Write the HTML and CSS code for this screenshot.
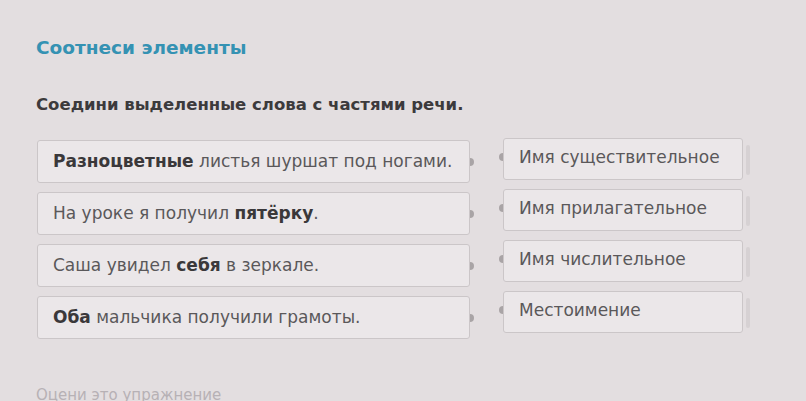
FILE: index.html
```html
<!DOCTYPE html>
<html lang="ru">
<head>
  <meta charset="UTF-8">
  <meta name="viewport" content="width=device-width, initial-scale=1.0">
  <title>Соотнеси элементы</title>
  <link rel="stylesheet" href="styles.css">
</head>
<body>
  <div class="task">
    <h2>Соотнеси элементы</h2>
    <p class="question">Соедини выделенные слова с частями речи.</p>

    <div class="match">
      <div class="column left">
        <div class="card"><b>Разноцветные</b> листья шуршат под ногами.<span class="dot"></span></div>
        <div class="card">На уроке я получил <b>пятёрку</b>.<span class="dot"></span></div>
        <div class="card">Саша увидел <b>себя</b> в зеркале.<span class="dot"></span></div>
        <div class="card"><b>Оба</b> мальчика получили грамоты.<span class="dot"></span></div>
      </div>
      <div class="column right">
        <div class="card">Имя существительное<span class="dot"></span><span class="handle"></span></div>
        <div class="card">Имя прилагательное<span class="dot"></span><span class="handle"></span></div>
        <div class="card">Имя числительное<span class="dot"></span><span class="handle"></span></div>
        <div class="card">Местоимение<span class="dot"></span><span class="handle"></span></div>
      </div>
    </div>

    <p class="rate">Оцени это упражнение</p>
  </div>
</body>
</html>
```

FILE: styles.css
```css
* {
  margin: 0;
  padding: 0;
  box-sizing: border-box;
}
body {
  font-family: 'DejaVu Sans', 'Open Sans', sans-serif;
  background-color: #e3dee0;
  color: #555;
  overflow: hidden;
}
.task {
  padding: 37px 36px 0 36px;
}
h2 {
  font-size: 18.5px;
  line-height: 22px;
  font-weight: bold;
  color: #3592b3;
}
.question {
  font-size: 16.5px;
  line-height: 22px;
  font-weight: bold;
  color: #3c3a3c;
  margin-top: 35px;
}
.match {
  display: flex;
  gap: 33px;
  margin-top: 21px;
  margin-left: 1px;
}
.column {
  display: flex;
  flex-direction: column;
  gap: 9px;
}
.left {
  width: 433px;
  margin-top: 3px;
}
.right {
  width: 240px;
  margin-top: 1px;
}
.card {
  position: relative;
  height: 43px;
  padding: 0 15px;
  line-height: 40px;
  background-color: #ebe7e9;
  border: 1px solid #cbc6c8;
  border-radius: 3px;
  font-size: 17px;
  color: #5a585a;
  white-space: nowrap;
}
.right .card {
  height: 42px;
  line-height: 36px;
}
.card b {
  color: #3a383a;
  font-weight: 700;
}
.dot {
  position: absolute;
  top: 50%;
  width: 4px;
  height: 8px;
  margin-top: -4px;
  background-color: #a9a4a6;
}
.left .dot {
  right: -5px;
  border-radius: 0 4px 4px 0;
}
.right .dot {
  left: -5px;
  border-radius: 4px 0 0 4px;
  margin-top: -6px;
}
.handle {
  position: absolute;
  right: -8px;
  top: 6px;
  width: 4px;
  height: 30px;
  border-radius: 2px;
  background-color: #d6d1d3;
}
.rate {
  margin-top: 47px;
  font-size: 15px;
  color: #b7b1b5;
}
```
